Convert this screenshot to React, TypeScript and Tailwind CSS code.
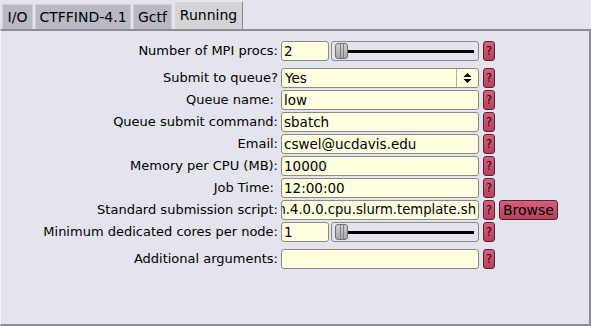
import React from "react";

const font = { fontFamily: '"DejaVu Sans", sans-serif' };

function Help() {
  return (
    <div className="w-[12px] h-[20px] rounded-[3px] border border-[#5a2030] bg-gradient-to-b from-[#d8607f] to-[#b8405f] text-[#1a0a10] text-[12px] leading-[18px] text-center shrink-0">
      ?
    </div>
  );
}

function Input({ value, w = 198 }: { value: string; w?: number }) {
  return (
    <div
      className="h-[20px] rounded-[3px] border border-[#8a8a80] bg-[#ffffe2] px-[2px] text-[13.5px] leading-[18px] text-black overflow-hidden whitespace-nowrap shrink-0"
      style={{ width: w }}
    >
      {value}
    </div>
  );
}

function Slider() {
  return (
    <div className="relative w-[148px] h-[20px] rounded-[3px] border border-[#8a8a8a] bg-[#e4e4ee] shrink-0">
      <div className="absolute left-[4px] right-[4px] top-[8px] h-[3px] bg-black" />
      <div className="absolute left-[3px] top-[1px] w-[13px] h-[16px] rounded-[3px] border border-[#707070] bg-gradient-to-b from-[#d0d0d0] to-[#a8a8a8] flex justify-center">
        <div className="w-[4px] h-full border-x border-[#808080]" />
      </div>
    </div>
  );
}

function Row({
  label,
  children,
  h = 22,
  pr = 2,
}: {
  label: string;
  children: React.ReactNode;
  h?: number;
  pr?: number;
}) {
  return (
    <div className="flex items-center" style={{ height: h }}>
      <div
        className="w-[279px] text-right text-[13px] text-black whitespace-nowrap"
        style={{ paddingRight: pr }}
      >
        {label}
      </div>
      <div className="ml-[1px] flex items-center gap-[4px]">{children}</div>
    </div>
  );
}

export default function App() {
  return (
    <div className="w-[591px] h-[326px] bg-[#e4e4ee] flex flex-col" style={font}>
      <div className="flex items-end h-[29px] pl-[2px] gap-[2px]">
        {[
          { t: "I/O", w: 31 },
          { t: "CTFFIND-4.1", w: 96 },
          { t: "Gctf", w: 39 },
        ].map((tab) => (
          <div
            key={tab.t}
            className="h-[25px] bg-[#b9b9c6] border-t border-l border-r border-[#d0d0da] text-[14px] leading-[24px] text-black text-center"
            style={{ width: tab.w }}
          >
            {tab.t}
          </div>
        ))}
        <div className="w-[69px] h-[28px] bg-[#d4d4d8] border-t border-l border-[#e8e8ee] border-r border-r-[#8a8a8a] text-[14px] leading-[26px] text-black text-center">
          Running
        </div>
      </div>
      <div className="flex-1 border-t-2 border-t-[#8c8c92] border-r-2 border-r-[#8c8c92] border-b-2 border-b-[#8c8c92] border-l border-l-[#f4f4f8] bg-[#e4e4ee] pt-[8px] flex flex-col">
        <Row label="Number of MPI procs:" h={24}>
          <div className="flex items-center gap-[2px]">
            <Input value="2" w={48} />
            <Slider />
          </div>
          <Help />
        </Row>
        <div className="h-[4px]" />
        <Row label="Submit to queue?">
          <div className="w-[198px] h-[20px] rounded-[3px] border border-[#8a8a80] bg-[#ffffe2] flex text-[13.5px] leading-[18px]">
            <div className="flex-1 px-[3px]">Yes</div>
            <div className="w-[22px] border-l border-[#b0b0a0] flex items-center justify-center">
              <svg width="9" height="12" viewBox="0 0 9 12">
                <path d="M4.5 1 L8.5 5 L0.5 5 Z" fill="black" />
                <path d="M4.5 11 L8.5 7 L0.5 7 Z" fill="black" />
              </svg>
            </div>
          </div>
          <Help />
        </Row>
        <Row label="Queue name:" pr={6}>
          <Input value="low" />
          <Help />
        </Row>
        <Row label="Queue submit command:">
          <Input value="sbatch" />
          <Help />
        </Row>
        <Row label="Email:">
          <Input value="cswel@ucdavis.edu" />
          <Help />
        </Row>
        <Row label="Memory per CPU (MB):">
          <Input value="10000" />
          <Help />
        </Row>
        <Row label="Job Time:" pr={6}>
          <Input value="12:00:00" />
          <Help />
        </Row>
        <Row label="Standard submission script:">
          <div className="w-[198px] h-[20px] rounded-[3px] border border-[#8a8a80] bg-[#ffffe2] text-[13.2px] leading-[18px] overflow-hidden whitespace-nowrap flex justify-end pr-[2px]">
            <span className="shrink-0">n.4.0.0.cpu.slurm.template.sh</span>
          </div>
          <Help />
          <div className="h-[20px] px-[3px] rounded-[3px] border border-[#5a2030] bg-gradient-to-b from-[#d8607f] to-[#b8405f] text-[14px] leading-[18px] text-black">
            Browse
          </div>
        </Row>
        <Row label="Minimum dedicated cores per node:">
          <div className="flex items-center gap-[2px]">
            <Input value="1" w={48} />
            <Slider />
          </div>
          <Help />
        </Row>
        <div className="h-[5px]" />
        <Row label="Additional arguments:">
          <Input value="" />
          <Help />
        </Row>
      </div>
    </div>
  );
}
